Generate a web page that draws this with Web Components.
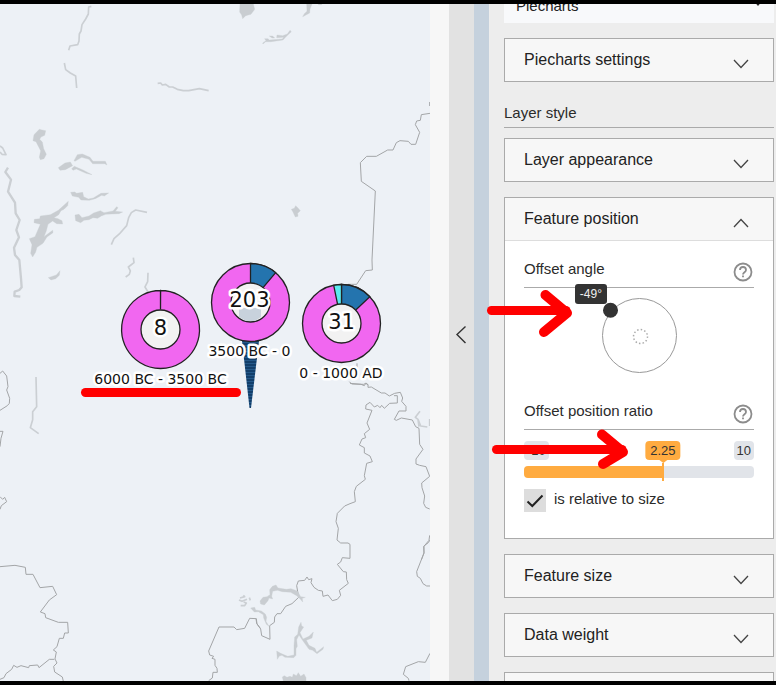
<!DOCTYPE html>
<html lang="en">
<head>
<meta charset="utf-8">
<title>Map style editor</title>
<style>
  body { margin: 0; font-family: "Liberation Sans", Arial, sans-serif; color: #333; }
</style>
</head>
<body>
<style-editor></style-editor>

<template id="t-editor">
  <style>
    :host { display: flex; position: relative; height: 100vh; box-sizing: border-box; overflow: hidden; border: solid #000; border-width: 4px 0; background: #ededed; }
    map-view { flex: 1; min-width: 0; }
    .gutter { width: 19px; background: #f7f7f7; }
    .toggle { width: 25px; padding: 0 0 16px; border: 0; background: #e2e2e2; display: flex; align-items: center; justify-content: center; }
    .edge { width: 15px; background: #c5d1dd; }
    aside { flex: 0 0 270px; padding: 0 2px 0 15px; display: flex; flex-direction: column; gap: 15px; }
    .section { display: flex; flex-direction: column; gap: 10px; }
    h2 { margin: 0; padding: 6px 0 4px; font-size: 15px; line-height: 20px; font-weight: 400; color: #2b2b2b; border-bottom: 1px solid #aaa; }
    .kind { margin-top: -17px; position: relative; flex: none; }
    .kind select { appearance: none; display: block; width: 100%; height: 36px; padding: 0 12px; border: 0; background: #f8f9fb; font: 15px "Liberation Sans", Arial, sans-serif; color: #222; }
    .kind svg { position: absolute; right: 11px; top: 13px; pointer-events: none; }
  </style>
  <map-view></map-view>
  <div class="gutter"></div>
  <button class="toggle" aria-label="Collapse panel"><svg width="13" height="21" viewBox="0 0 13 21" fill="none" stroke="#333" stroke-width="1.4"><path d="M10.500 2.500L2 10.500L10.500 19"/></svg></button>
  <div class="edge"></div>
  <aside>
    <div class="kind">
      <select aria-label="Layer type"><option>Piecharts</option></select>
      <svg width="10" height="6" viewBox="0 0 10 6"><path d="M0 0h10L5 6z" fill="#222"/></svg>
    </div>
    <fold-panel label="Piecharts settings"></fold-panel>
    <div class="section">
      <h2>Layer style</h2>
      <fold-panel label="Layer appearance"></fold-panel>
    </div>
    <fold-panel label="Feature position" open>
      <labelled-field label="Offset angle"><angle-dial></angle-dial></labelled-field>
      <labelled-field label="Offset position ratio"><ratio-slider></ratio-slider></labelled-field>
      <tick-box>is relative to size</tick-box>
    </fold-panel>
    <fold-panel label="Feature size"></fold-panel>
    <fold-panel label="Data weight"></fold-panel>
    <fold-panel label=""></fold-panel>
  </aside>
  <note-arrows></note-arrows>
</template>

<template id="t-fold">
  <style>
    :host { display: block; flex: none; box-sizing: border-box; border: 1px solid #aaa; background: #fff; }
    button { display: flex; width: 100%; height: 42px; box-sizing: border-box; padding: 0 24px 0 19px; border: 0; background: #f7f7f7; align-items: center; justify-content: space-between; font: 16px "Liberation Sans", Arial, sans-serif; color: #222; text-align: left; }
    svg { margin-top: 8px; }
    .body { display: none; padding: 18px 19px 26px; border-top: 1px solid #ddd; }
    :host([open]) .body { display: block; }
    :host([open]) svg { transform: rotate(180deg); }
  </style>
  <button><span></span><svg width="16" height="10" viewBox="0 0 16 10" fill="none" stroke="#444" stroke-width="1.3"><path d="M1 1L8 8.500L15 1"/></svg></button>
  <div class="body"><slot></slot></div>
</template>

<template id="t-field">
  <style>
    :host { display: block; }
    .head { display: flex; justify-content: space-between; align-items: flex-end; padding-bottom: 4px; border-bottom: 1px solid #aaa; }
    .name { font-size: 15px; line-height: 20px; padding-bottom: 4px; color: #2b2b2b; }
    .help { width: 22px; height: 22px; padding: 0; border: 0; background: none; }
    .help svg { display: block; }
  </style>
  <div class="head"><span class="name"></span><button class="help" aria-label="Help"><svg width="22" height="22" viewBox="0 0 22 22" fill="none" stroke="#8c8c8c" stroke-width="1.800"><circle cx="11" cy="11" r="8.500"/><path d="M8 9a3 3 0 0 1 6 0c0 2.200-3 2.200-3 4.500M11 14.500v1.800"/></svg></button></div>
  <slot></slot>
</template>

<template id="t-dial">
  <style>
    :host { display: flex; justify-content: center; padding: 10px 0 27px; }
    .dial { position: relative; width: 76px; height: 76px; }
    svg { display: block; overflow: visible; }
    .tip { position: absolute; right: 70px; bottom: 70px; padding: 0 5px; font-size: 12px; line-height: 20px; border-radius: 3px; background: #333; color: #eee; }
    input { position: absolute; inset: 0; width: 100%; height: 100%; margin: 0; opacity: 0; }
  </style>
  <div class="dial">
    <svg width="76" height="76" viewBox="0 0 76 76"><circle cx="38.500" cy="37.500" r="37" fill="#fff" stroke="#999"/><circle cx="39.500" cy="38.500" r="7" fill="none" stroke="#aaa" stroke-width="1.500" stroke-dasharray="1.500 2.165"/><circle cx="9.500" cy="12.300" r="7.500" fill="#333"/></svg>
    <span class="tip">-49°</span>
    <input type="range" min="-180" max="180" value="-49" aria-label="Offset angle">
  </div>
</template>

<template id="t-ratio">
  <style>
    :host { display: block; padding: 11px 0; }
    .marks { position: relative; display: flex; justify-content: space-between; margin-bottom: 6px; font-size: 13px; line-height: 19px; color: #333; }
    .marks span { padding: 0 3px; border-radius: 4px; background: #e1e4e9; }
    .marks .now { position: absolute; left: 60.4%; transform: translateX(-50%); padding: 0 5px; background: #ffab40; }
    .now::after { content: ""; position: absolute; left: 50%; top: 100%; margin-left: -4px; border: solid transparent; border-width: 3px 4px 0; border-top-color: #ffab40; }
    input { appearance: none; display: block; width: 100%; height: 12px; margin: 0; border-radius: 4px; background: linear-gradient(90deg, #ffab40 60.4%, #e1e4e9 60.4%); }
    input::-webkit-slider-thumb { appearance: none; width: 16px; height: 18px; border: 0; background: linear-gradient(90deg, transparent 7px, #ffab40 7px 9px, transparent 9px); }
  </style>
  <div class="marks"><span>-10</span><span class="now">2.25</span><span>10</span></div>
  <input type="range" min="-10" max="10" step="0.05" value="2.25" aria-label="Offset position ratio">
</template>

<template id="t-tick">
  <style>
    :host { display: block; }
    label { display: flex; gap: 8px; font-size: 15px; line-height: 20px; color: #2b2b2b; }
    .box { position: relative; width: 22px; height: 23px; }
    input { appearance: none; display: block; width: 100%; height: 100%; margin: 0; background: #ddd; }
    svg { position: absolute; inset: 0; display: none; pointer-events: none; }
    input:checked + svg { display: block; }
  </style>
  <label><span class="box"><input type="checkbox" checked><svg width="22" height="23" viewBox="0 0 22 23" fill="none" stroke="#222" stroke-width="2"><path d="M3.500 12.500L8.300 17L18.500 6.500"/></svg></span><slot></slot></label>
</template>

<template id="t-arrows">
  <style>
    :host { position: absolute; top: 286px; right: 0; width: 290px; pointer-events: none; }
    svg { display: block; }
  </style>
  <svg width="290" height="190" viewBox="486 290 290 190" fill="none" stroke="#f00" stroke-width="9" stroke-linecap="round" stroke-linejoin="round">
    <path d="M491.500 310.500H566"/><path stroke-width="10" d="M545.500 295L567 313L544 332"/>
    <path d="M496.500 449.500H622"/><path stroke-width="10" d="M602 434.500L623 452L603 464"/>
  </svg>
</template>

<template id="t-map">
  <style>
    :host { display: block; overflow: hidden; background: #edf1f6; }
    svg { display: block; width: 100%; height: 100%; }
    text { font-family: "DejaVu Sans", sans-serif; fill: #111; text-anchor: middle; paint-order: stroke; stroke: #fff; stroke-linejoin: round; }
    .n { font-size: 21px; stroke-width: 5px; }
    .l { font-size: 14px; stroke-width: 5px; }
    .water { fill: #c9cdd1; stroke: #c9cdd1; stroke-width: 1; stroke-linejoin: round; }
    .river { fill: none; stroke: #cbcfd3; stroke-width: 5; stroke-linejoin: round; }
    .thin { stroke-width: 7; }
    .border { fill: none; stroke: #a3a5a7; stroke-width: 3; stroke-linejoin: round; }
    .pie { stroke: #222; stroke-width: 1.3; }
  </style>
  <svg viewBox="0 4 430 677" preserveAspectRatio="xMidYMid slice">
    <defs><pattern id="stripe" width="4" height="3" patternUnits="userSpaceOnUse"><rect width="4" height="3" fill="#123f6b"/><rect width="4" height="1" fill="#24598a"/></pattern></defs>
    <g transform="scale(.33333)">
      <path class="river" d="M274 19L266 21L265 42L257 57L246 74L243 93L238 102L237 123L233 134L210 138L206 151M193 189L197 209L211 219L227 228L230 264M0 438L8 444L18 464L6 463L0 456"/>
      <path class="river" d="M473 250L482 249L487 255L497 253L508 261L518 261L532 268L550 272L566 272L598 266L626 272"/>
      <path class="water" d="M720 12H760L764 28L753 43L737 47L728 56L725 45L719 36ZM118 388L126 390L137 392L134 406L123 411L119 418L127 426L131 446L139 463L132 476L121 479L118 472L122 452L108 425L99 422L102 404ZM175 503L195 489L211 486L218 497L196 509L180 511ZM222 482L232 464L247 462L270 472L279 484L316 484L321 495L314 491L278 491L267 478L245 472L225 484ZM215 506L223 499L249 510L276 524L258 520L229 507L219 511ZM212 577L224 576L230 580L248 577L251 590L265 597L280 594L303 580L326 579L313 588L305 586L286 596L268 601L243 600L236 592L217 588Z"/>
      <path class="water" d="M225 645L237 643L246 653L267 648L281 639L301 632L312 638L339 633L350 620L354 623L346 634L368 636L357 641L334 642L317 643L304 648L293 655L279 653L267 659L252 661L242 668L227 662ZM200 608L205 604L203 617L192 628L183 632L176 644L162 653L174 656L186 662L188 672L170 671L158 663L144 673L139 692L132 710L158 691L159 698L141 711L129 730L111 742L107 756L98 771L92 760L96 734L88 716L105 710L121 673L102 668L103 658L119 656L121 648L151 644L175 631ZM145 833L169 825L180 812L178 826L167 836L153 840Z"/>
      <path class="river thin" d="M24 503L16 516L33 539L24 575L45 608L47 640L59 660L49 690L57 712L42 743L45 765L58 780L63 835L65 862L58 870L44 875L43 888L61 890"/>
      <path class="river" d="M441 637L407 630L394 638L386 653L380 677L358 702L342 716L334 734M400 773L402 788L385 801L391 813L388 823L377 831M444 818L443 845L435 861L447 881M108 1131L110 1220L98 1235L98 1259L91 1283L116 1301"/>
    </g>
    <g transform="translate(240) scale(.33333)">
      <path class="water" d="M200 12H216L210 27L209 39L188 50L193 41L201 34ZM68 129L78 122L74 116L84 116L88 120L127 117L131 112L110 113L111 105L128 107L142 102L150 91L154 95L138 110L129 120L93 125L77 125L69 132ZM88 108L98 108L104 114L96 114ZM154 628L163 625L167 617L174 624L181 632L173 640L174 649L166 651L159 636ZM235 12H245V14H235Z"/>
      <path class="border" d="M570 340L544 344L541 361L530 363L526 374L539 397L527 433H513L505 424L480 422L469 428L459 450H443L409 469H380L361 488L364 544L406 573L396 780L397 810L377 812L350 853H324L328 861L352 863L358 887M351 1090V1120M328 1145L335 1152L371 1153L377 1150L385 1155M569 306V318"/>
    </g>
    <g transform="translate(0 400) scale(.33333)">
      <path class="border" d="M0 31L22 17L28 10L29 -5L20 -30L24 -40L20 -72L8 -87L0 -80M0 94H9L3 115L0 140M0 290L8 298L14 292L20 305L4 317L0 328M0 500L45 496L76 502L78 523H99L120 563L158 559L170 584L148 600L121 636L135 641L137 653L175 667H203L205 699H194L190 715H178L171 740L160 750L169 756L165 777L171 789L161 799L164 816L187 831L190 844M163 778H148L117 803L113 795L88 797L86 803L63 797L51 802L41 796L35 808L18 821L12 833L0 838"/>
      <path class="border" d="M626 842L637 834L639 817H652L651 805L645 796V778L636 775L641 769L629 765L626 753L657 681H702L710 689L734 685L749 655L769 656L771 672L781 685"/>
    </g>
    <g transform="translate(200 540) scale(.33333)">
      <path class="border" d="M168 236L170 250L182 267L185 287L210 298L209 257L223 247L224 231L231 221H242L257 199L276 191L296 172L290 137L295 123L314 121L321 111L326 119L336 116L333 128L342 142L355 151L367 153L369 169L384 165L397 182L412 178L422 166L418 151L445 130L440 119L439 96L430 95L412 73L422 66L427 53L450 55V13L444 9H422L411 0M690 0L685 8L672 18V39L650 95L652 109L661 115L669 131L680 138H690M690 340L676 367L655 365L617 380L610 403L625 415L627 422"/>
      <path class="water" d="M209 149L217 139L228 135L234 144L259 148L273 146L292 153L302 170L316 172L307 175L308 186L300 176L290 167L272 157L247 155L232 151L218 154L215 169L218 177L207 174L204 182L193 195L182 192L180 183L189 172L201 170L210 164ZM152 204L164 202L167 210L184 213L196 222L200 232L198 244L207 259L199 253L191 234L190 224L175 215L163 216ZM230 333L242 340L263 349L282 345V316L284 291L293 283L296 261L303 247L305 258L311 261L300 278L309 297L327 289L340 276L336 294L319 301L327 316L345 325L350 337L371 320L369 328L351 341L338 331L327 328L307 300L297 285L290 299L292 319L288 326V346L281 353L255 352L246 346L238 348L232 358ZM247 411L253 407L261 412L270 409L277 412L280 402L289 407L295 398L302 409L312 402L318 413V423H250Z"/>
      <path class="river" d="M117 180L126 184L141 178M120 174L134 170L130 166M131 186L139 189L134 197H122M148 173L151 181"/>
    </g>
    <g transform="translate(350 340) scale(.33333)">
      <path class="border" d="M0 130L33 133L43 137L48 129L54 134V142L64 141L94 159H105L118 168L134 160L151 157L158 174L155 184L168 199V213H147L133 238L139 241L154 234L187 240L197 260L207 265L209 313L219 328L198 357V372L209 376L228 380L239 409L215 429L216 443L224 468L221 490L227 502L239 507M132 167H142V189L119 190L103 205L95 196L90 203L83 196L73 201L60 187L48 195L47 207L66 211L51 249L59 268L43 281L47 293L36 297L28 315L43 323V339L60 348L67 365L50 370L43 407L46 418L19 439L13 455L16 485L0 491L-16 498L-38 520L-42 545L-35 565L-39 600M239 586L237 601L221 620L222 639L214 660"/>
      <path class="river" d="M210 214L196 232L204 238L207 260M205 240L212 258L232 261M239 237V258"/>
    </g>

    <path d="M242 341H259L251 408H249.500Z" fill="url(#stripe)"/>
    <g class="pie">
      <path d="M160.500 309.500V290.500A39 39 0 1 0 160.600 290.500Z" fill="#f167f0"/><circle cx="160.500" cy="329.500" r="19.500" fill="#f2f2f2"/>
      <circle cx="250.500" cy="302.500" r="39" fill="#f167f0"/><path d="M250.500 302.500V263.500A39 39 0 0 1 275.700 272.700Z" fill="#2474ae"/><circle cx="250.500" cy="302.500" r="19.500" fill="#f2f2f2"/>
      <circle cx="341.500" cy="323.500" r="39" fill="#f167f0"/><path d="M341.500 323.500V284.500A39 39 0 0 1 369.800 296.700Z" fill="#2474ae"/><path d="M341.500 323.500L333.700 285.300A39 39 0 0 1 341.500 284.500Z" fill="#5ceaf0"/><circle cx="341.500" cy="323.500" r="19.500" fill="#f2f2f2"/>
    </g>
    <path d="M239 308H261V317L255 321H246L239 317Z" fill="#c8d2dc"/>
    <text class="n" x="160.500" y="335">8</text>
    <text class="n" x="249.500" y="307">203</text>
    <text class="n" x="341.500" y="329">31</text>
    <text class="l" x="160.500" y="384">6000 BC - 3500 BC</text>
    <text class="l" x="249.500" y="356">3500 BC - 0</text>
    <text class="l" x="341" y="378">0 - 1000 AD</text>
    <path d="M85.500 392.500H236.500" stroke="#f00" stroke-width="9" stroke-linecap="round"/>
  </svg>
</template>

<script>
  function define(name, templateId, setup) {
    customElements.define(name, class extends HTMLElement {
      constructor() {
        super();
        this.attachShadow({ mode: "open" }).append(document.getElementById(templateId).content.cloneNode(true));
      }
      connectedCallback() { if (setup) setup(this, this.shadowRoot); }
    });
  }
  define("map-view", "t-map");
  define("fold-panel", "t-fold", (host, root) => {
    root.querySelector("span").textContent = host.getAttribute("label");
    root.querySelector("button").onclick = () => host.toggleAttribute("open");
  });
  define("labelled-field", "t-field", (host, root) => {
    root.querySelector(".name").textContent = host.getAttribute("label");
  });
  define("angle-dial", "t-dial");
  define("ratio-slider", "t-ratio");
  define("tick-box", "t-tick");
  define("note-arrows", "t-arrows");
  define("style-editor", "t-editor");
</script>
</body>
</html>
